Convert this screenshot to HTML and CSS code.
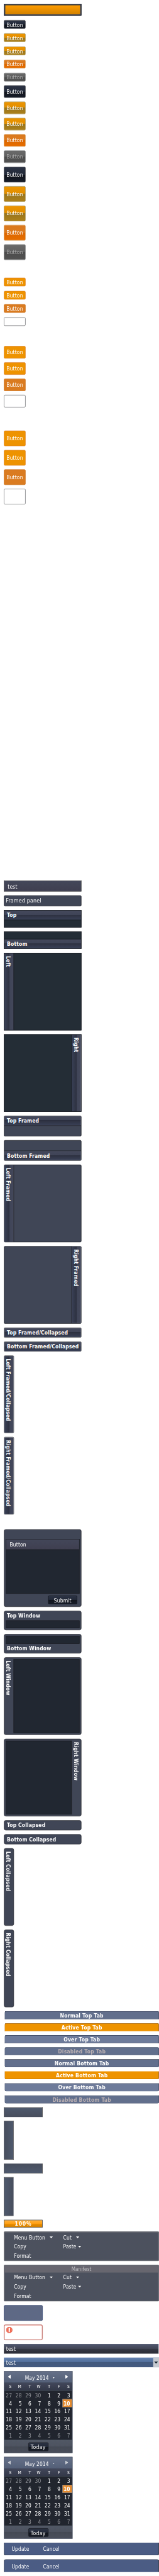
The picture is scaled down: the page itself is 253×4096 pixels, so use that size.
FILE: index.html
```html
<!DOCTYPE html>
<html lang="en">
<head>
<meta charset="utf-8">
<title>Theme widgets</title>
<link rel="stylesheet" href="styles.css">
</head>
<body>
<div class="page">
<main class="sheet">
  <div class="progress"><div class="progress-fill"></div></div>

  <section class="stack small">
    <div class="btn dark">Button</div>
    <div class="btn over">Button</div>
    <div class="btn over">Button</div>
    <div class="btn pressed">Button</div>
    <div class="btn disabled">Button</div>
  </section>
  <section class="stack medium">
    <div class="btn dark">Button</div>
    <div class="btn over">Button</div>
    <div class="btn over">Button</div>
    <div class="btn pressed">Button</div>
    <div class="btn disabled">Button</div>
  </section>
  <section class="stack large">
    <div class="btn dark">Button</div>
    <div class="btn over">Button</div>
    <div class="btn over">Button</div>
    <div class="btn pressed">Button</div>
    <div class="btn disabled">Button</div>
  </section>

  <section class="stack small toolbar-small">
    <div class="btn flat">Button</div>
    <div class="btn flat">Button</div>
    <div class="btn flat-pressed">Button</div>
    <div class="btn empty"></div>
  </section>
  <section class="stack medium toolbar-medium">
    <div class="btn flat">Button</div>
    <div class="btn flat">Button</div>
    <div class="btn flat-pressed">Button</div>
    <div class="btn empty"></div>
  </section>
  <section class="stack large toolbar-large">
    <div class="btn flat">Button</div>
    <div class="btn flat">Button</div>
    <div class="btn flat-pressed">Button</div>
    <div class="btn empty"></div>
  </section>

  <section class="stack panels">
    <div class="strip">test</div>
    <div class="strip framed-strip">Framed panel</div>
    <div class="panel top"><div class="head">Top</div></div>
    <div class="panel bottom"><div class="head">Bottom</div></div>
    <div class="panel left"><div class="head">Left</div></div>
    <div class="panel right"><div class="head">Right</div></div>
    <div class="panel framed top"><div class="head">Top Framed</div></div>
    <div class="panel framed bottom"><div class="head">Bottom Framed</div></div>
    <div class="panel framed left"><div class="head">Left Framed</div></div>
    <div class="panel framed right"><div class="head">Right Framed</div></div>
    <div class="panel framed top collapsed"><div class="head">Top Framed/Collapsed</div></div>
    <div class="panel framed top collapsed"><div class="head">Bottom Framed/Collapsed</div></div>
    <div class="panel framed left collapsed"><div class="head">Left Framed/Collapsed</div></div>
    <div class="panel framed left collapsed"><div class="head">Right Framed/Collapsed</div></div>
  </section>

  <section class="stack windows">
    <div class="window dialog">
      <div class="win-body"><div class="win-bar">Button</div></div>
      <div class="btn dark submit">Submit</div>
    </div>
    <div class="window wtop"><div class="title">Top Window</div><div class="win-body"></div></div>
    <div class="window wbottom"><div class="win-body"></div><div class="title">Bottom Window</div></div>
    <div class="window wleft"><div class="title">Left Window</div><div class="win-body"></div></div>
    <div class="window wright"><div class="win-body"></div><div class="title">Right Window</div></div>
    <div class="window wclosed"><div class="title">Top Collapsed</div></div>
    <div class="window wclosed"><div class="title">Bottom Collapsed</div></div>
    <div class="window vclosed"><div class="title">Left Collapsed</div></div>
    <div class="window vclosed"><div class="title">Right Collapsed</div></div>
  </section>

  <section class="stack tabs">
    <div class="tab">Normal Top Tab</div>
    <div class="tab active">Active Top Tab</div>
    <div class="tab hover">Over Top Tab</div>
    <div class="tab off">Disabled Top Tab</div>
    <div class="tab low">Normal Bottom Tab</div>
    <div class="tab low active">Active Bottom Tab</div>
    <div class="tab low hover">Over Bottom Tab</div>
    <div class="tab low off">Disabled Bottom Tab</div>
  </section>

  <section class="stack misc">
    <div class="tabbar bar-top"></div>
    <div class="tabbar bar-right"></div>
    <div class="tabbar bar-bottom"></div>
    <div class="tabbar bar-left"></div>
    <div class="percent">100%</div>
    <div class="menu">
      <div class="item wide">Menu Button<i class="caret"></i></div><div class="item second">Cut<i class="caret cut"></i></div>
      <div class="item">Copy</div><div class="item second">Paste<i class="caret paste"></i></div>
      <div class="item">Format</div>
    </div>
    <div class="menu titled">
      <div class="menu-title">Manifest</div>
      <div class="item wide">Menu Button<i class="caret"></i></div><div class="item second">Cut<i class="caret cut"></i></div>
      <div class="item">Copy</div><div class="item second">Paste<i class="caret paste"></i></div>
      <div class="item">Format</div>
    </div>
    <div class="tip"></div>
    <div class="tip error">
      <svg width="16" height="16" viewBox="0 0 16 16"><path d="M5 .5h6L15.500 5v6L11 15.500H5L.5 11V5z" fill="#f26a52" stroke="#c9412f"/><path d="M5.400 1.600h5.200l3.800 3.800v5.200l-3.800 3.800H5.400l-3.800-3.800V5.400z" fill="none" stroke="#ff9c89" stroke-width=".8"/><path d="M6.200 3h3.600v7H6.200zM6.200 11h3.600v2H6.200z" fill="#fff"/></svg>
    </div>
    <div class="grid-head">test</div>
    <div class="grid-head lit">test<span class="trigger"><i></i></span></div>

    <div class="cal">
      <div class="cal-top"><i class="prev"></i><span class="month">May 2014<i></i></span><i class="next"></i></div>
      <div class="days"><b>S</b><b>M</b><b>T</b><b>W</b><b>T</b><b>F</b><b>S</b></div>
      <div class="dates">
        <span class="out">27</span><span class="out">28</span><span class="out">29</span><span class="out">30</span><span>1</span><span>2</span><span>3</span>
        <span>4</span><span>5</span><span>6</span><span>7</span><span>8</span><span>9</span><span class="today">10</span>
        <span>11</span><span>12</span><span>13</span><span>14</span><span>15</span><span>16</span><span>17</span>
        <span>18</span><span>19</span><span>20</span><span>21</span><span>22</span><span>23</span><span>24</span>
        <span>25</span><span>26</span><span>27</span><span>28</span><span>29</span><span>30</span><span>31</span>
        <span class="out">1</span><span class="out">2</span><span class="out">3</span><span class="out">4</span><span class="out">5</span><span class="out">6</span><span class="out">7</span>
      </div>
      <div class="cal-foot"><div class="btn dark">Today</div></div>
    </div>
    <div class="cal dim">
      <div class="cal-top"><i class="prev"></i><span class="month">May 2014<i></i></span><i class="next"></i></div>
      <div class="days"><b>S</b><b>M</b><b>T</b><b>W</b><b>T</b><b>F</b><b>S</b></div>
      <div class="dates">
        <span class="out">27</span><span class="out">28</span><span class="out">29</span><span class="out">30</span><span>1</span><span>2</span><span>3</span>
        <span>4</span><span>5</span><span>6</span><span>7</span><span>8</span><span>9</span><span class="today">10</span>
        <span>11</span><span>12</span><span>13</span><span>14</span><span>15</span><span>16</span><span>17</span>
        <span>18</span><span>19</span><span>20</span><span>21</span><span>22</span><span>23</span><span>24</span>
        <span>25</span><span>26</span><span>27</span><span>28</span><span>29</span><span>30</span><span>31</span>
        <span class="out">1</span><span class="out">2</span><span class="out">3</span><span class="out">4</span><span class="out">5</span><span class="out">6</span><span class="out">7</span>
      </div>
      <div class="cal-foot"><div class="btn dark">Today</div></div>
    </div>

    <div class="editor"><span>Update</span><span>Cancel</span></div>
    <div class="editor upper"><span>Update</span><span>Cancel</span></div>
  </section>
</main>
</div>
</body>
</html>
```
FILE: styles.css
```css
* { box-sizing: border-box; }

body { margin: 0; background: #fff; }

.page {
  width: 253px;
  height: 4096px;
  overflow: hidden;
}

.sheet {
  width: 410px;
  height: 6640px;
  padding: 10px 0 10px 10px;
  transform: scale(.61705, .61686);
  transform-origin: 0 0;
  font: 13.8px/16px "DejaVu Sans Condensed", "DejaVu Sans", sans-serif;
  letter-spacing: .2px;
  color: #fff;
  white-space: nowrap;
}

/* progress bar */
.progress {
  width: 200px;
  height: 30px;
  padding: 2px;
  border: 1px solid #17191f;
  background: #404656;
}
.progress-fill {
  height: 24px;
  border: 1px solid #c47f08;
  border-radius: 3px;
  background: linear-gradient(#ff9c00, #d48300);
}

/* buttons */
.stack { display: flex; flex-direction: column; align-items: flex-start; gap: 10px; }
.small { gap: 12px; margin-top: 12px; }
.medium, .large { margin-top: 10px; }
.toolbar-small { margin-top: 46px; }
.toolbar-medium { margin-top: 52px; }
.toolbar-large { margin-top: 60px; }

.btn {
  width: 56px;
  height: 22px;
  display: flex;
  align-items: center;
  justify-content: center;
  padding-top: 2px;
  border: 1px solid;
  border-radius: 3px;
}
.medium .btn { height: 32px; padding-top: 0; }
.large .btn { height: 40px; padding-top: 0; }

.dark { border-color: #05070d; background: linear-gradient(#2c3344, #222938 50%, #11141b 50%, #171c28); }
.over { border-color: #927116; background: linear-gradient(#ed9400, #e18f00 50%, #98751f 50%, #ac801a); }
.pressed { border-color: #cd7311; background: linear-gradient(#da791e, #dd7b1f 50%, #dc6700 50%, #e76e00); }
.disabled { border-color: #4f5050; background: linear-gradient(#6a6a6a, #606060 50%, #4c4c4c 50%, #525252); color: #a9a9a9; }
.flat { border-color: #dd7c20; background: #ee9300; }
.flat-pressed { border-color: #c96d17; background: #da7b20; }
.empty { border-color: #55565a; background: #fff; }

/* panels */
.panels { margin-top: 970px; }

.strip {
  width: 200px;
  height: 28px;
  padding: 6px 0 0 9px;
  border: 1px solid #16171d;
  background: linear-gradient(#434759, #3f3f50);
}
.framed-strip {
  padding: 5px 0 0 4px;
  border-radius: 3px;
  background: #404656;
  font-size: 14.500px;
}

.panel {
  width: 200px;
  height: 200px;
  display: flex;
  overflow: hidden;
  border: 1px solid #17181d;
  background: #242d36;
}
.panel.framed { border-radius: 3px; background: #404656; }
.panel.top { height: 45px; flex-direction: column; }
.panel.bottom { height: 45px; flex-direction: column; justify-content: flex-end; }
.panel.framed.top, .panel.framed.bottom { height: 53px; }
.panel.right { justify-content: flex-end; }

.head { flex: none; font-weight: bold; }
.top .head, .bottom .head { height: 25px; padding: 4px 0 0 7px; }
.top .head {
  border-bottom: 1px solid #17181d;
  background: linear-gradient(#565b6c 1px, #44485b 1px, #3f4457 11px, #2b2f3e 11px, #2f3343 13px, #394056);
}
.bottom .head {
  border-top: 1px solid #17181d;
  background: linear-gradient(#44485b, #3f4457 11px, #2b2f3e 11px, #2f3343 13px, #394056 23px, #5a6071 23px);
}
.left .head, .right .head {
  width: 25px;
  padding: 7px 5px 0 3px;
  writing-mode: vertical-rl;
}
.left .head {
  border-right: 1px solid #17181d;
  background: linear-gradient(90deg, #5a6071 1px, #394056 1px, #2f3343 11px, #2b2f3e 13px, #3f4457 13px, #44485b);
}
.right .head {
  border-left: 1px solid #17181d;
  background: linear-gradient(90deg, #394056, #2f3343 11px, #2b2f3e 13px, #3f4457 13px, #44485b 23px, #5a6071 23px);
}
.framed .head { box-shadow: inset 0 0 0 1px #565c6c; }
.panel.collapsed.top { height: 26px; }
.collapsed.top .head { height: 24px; border: 0; }
.panel.collapsed.left { width: 26px; }
.collapsed.left .head { width: 24px; border: 0; }

/* windows */
.windows { margin-top: 38px; }
.window {
  width: 200px;
  height: 200px;
  display: flex;
  padding: 4px;
  border: 1px solid #2a2b30;
  border-radius: 5px;
  background: #404656;
}
.win-body { flex: 1; border: 1px solid #1a1b1f; background: #212731; }
.dialog { flex-direction: column; padding-top: 24px; align-items: stretch; }
.dialog .win-body { flex: none; height: 141px; }
.win-bar {
  height: 27px;
  padding: 5px 0 0 9px;
  border-bottom: 1px solid #1a1b1f;
  background: linear-gradient(#434759, #3f3f50);
}
.submit { width: 75px; margin: 5px 6px 0 auto; }
.title { flex: none; font-weight: bold; }
.wtop, .wbottom { height: 50px; flex-direction: column; }
.wtop .title, .wbottom .title { height: 20px; padding-left: 3px; }
.wbottom .title { padding-top: 4px; }
.wleft .title, .wright .title, .vclosed .title { width: 20px; padding-top: 3px; writing-mode: vertical-rl; }
.wleft .title { padding-right: 5px; }
.wclosed { height: 26px; padding: 4px 0 0 7px; }
.vclosed { width: 26px; padding-left: 3px; }
.vclosed .title { width: 16px; }

/* tabs */
.tabs { margin: 10px 0 0 2px; }
.tab {
  width: 398px;
  height: 21px;
  padding-top: 2px;
  border: 1px solid #28334c;
  border-bottom-color: #17191f;
  border-radius: 4px 4px 0 0;
  background: #626f8c;
  font-weight: bold;
  line-height: 17px;
  letter-spacing: .35px;
  text-align: center;
}
.tab.low { border-color: #17191f #28334c #28334c; border-radius: 0 0 4px 4px; }
.tab.hover { background: #6e7b9a; }
.tab.off { color: #b9afb2; }
.tab.active { border-color: #85500f; border-bottom-color: #ee9300; background: #ee9300; }
.tab.low.active { border-color: #ee9300 #85500f #85500f; }

.misc { margin-top: 10px; }
.tabbar { width: 100px; height: 25px; border: 1px solid #17181d; }
.bar-top { border-bottom: 0; background: linear-gradient(#4e596d, #484e5d); }
.bar-bottom { border-top: 0; background: linear-gradient(#484e5d, #4e596d); }
.bar-left, .bar-right { width: 25px; height: 100px; }
.bar-right { border-left: 0; background: linear-gradient(90deg, #484e5d, #4e596d); }
.bar-left { border-right: 0; background: linear-gradient(90deg, #4e596d, #484e5d); }

.percent {
  width: 100px;
  height: 20px;
  padding-top: 1px;
  border: 1px solid #1b1a17;
  background: linear-gradient(#ffb03b, #ff9f12 50%, #f09000 50%, #cd7d00);
  font-weight: bold;
  letter-spacing: 1.300px;
  text-align: center;
}

/* menus */
.menu {
  width: 400px;
  height: 76px;
  display: grid;
  grid-template-columns: 151px 1fr;
  grid-template-rows: repeat(3, 24px);
  padding-top: 2px;
  border: 1px solid #585b62;
  border-radius: 2px;
  box-shadow: inset 0 0 0 1px #74747a;
  background: #4c515e;
  font-size: 13.600px;
}
.item { display: flex; align-items: center; padding-left: 25px; }
.item.second { padding-left: 1px; }
.item.wide { gap: 11px; }
.caret { width: 9px; height: 5px; background: #fff; clip-path: polygon(0 0, 100% 0, 50% 100%); }
.caret.cut { margin-left: 11px; }
.caret.paste { margin-left: 4px; }
.titled { height: 94px; padding-top: 1px; grid-template-rows: 18px repeat(3, 24px); }
.menu-title {
  grid-column: 1 / 3;
  margin: 0 1px;
  background: #67666f;
  color: #c1c1c5;
  font-size: 13px;
  line-height: 19px;
  text-align: center;
}

/* tips */
.tip { width: 100px; height: 40px; border: 1px solid #172b5b; border-radius: 3px; background: #5e6985; }
.error {
  padding: 5px 0 0 5px;
  border-color: #a5332a;
  border-radius: 4px;
  box-shadow: inset 0 0 0 1px #df7d72;
  background: #fff;
}
.error svg { display: block; }

/* grid headers */
.grid-head {
  width: 400px;
  height: 25px;
  display: flex;
  padding: 5px 0 0 6px;
  border-right: 1px solid #c5c9d2;
  background: linear-gradient(#525971, #404453 50%, #353844 50%, #2b2d37);
}
.lit { border: 0; background: linear-gradient(#6583b2, #4f6c98 50%, #42597d 50%, #445a80); }
.trigger { width: 15px; height: 25px; margin: -5px 0 0 auto; padding: 10px 0 0 2px; background: #c6cad0; }
.trigger i { display: block; width: 11px; height: 6px; background: #1c2a35; clip-path: polygon(0 0, 100% 0, 50% 100%); }

/* calendar */
.cal { width: 177px; height: 211px; border: 1px solid #707a8e; background: #21252e; }
.cal-top {
  height: 29px;
  display: flex;
  justify-content: space-between;
  padding: 8px 10px 0 9px;
  background: linear-gradient(#657088, #535f77);
}
.prev, .next { width: 8px; height: 11px; background: #fff; clip-path: polygon(0 50%, 100% 0, 100% 100%); }
.next { clip-path: polygon(0 0, 100% 50%, 0 100%); }
.dim .prev, .dim .next { background: #c8ccd3; }
.month { display: flex; align-items: center; gap: 10px; height: 17px; margin-left: 9px; font-size: 13.500px; }
.month i { width: 5px; height: 3px; background: #fff; clip-path: polygon(0 0, 100% 0, 50% 100%); }
.days {
  height: 21px;
  display: grid;
  grid-template-columns: repeat(7, 25px);
  border-bottom: 1px solid #48535c;
  background: linear-gradient(#42475a, #333848);
  font-size: 11px;
  line-height: 21px;
  text-align: right;
}
.days b { padding-right: 6px; font-weight: normal; }
.dates {
  display: grid;
  grid-template: repeat(6, 21px) / repeat(7, 25px);
  font-size: 13.500px;
  line-height: 22px;
  text-align: right;
}
.dates span { padding-right: 5px; }
.out { color: #92949a; }
.dates .today { padding-right: 4px; border: 1px solid #7b8699; background: #e58a2c; font-weight: bold; line-height: 20px; }
.cal-foot {
  height: 33px;
  display: flex;
  justify-content: center;
  padding-top: 7px;
  background: linear-gradient(#515865, #4d5360 50%, #444954 50%, #494e5b);
}
.cal-foot .btn { width: 52px; letter-spacing: .6px; }

/* row editor buttons */
.editor {
  width: 400px;
  height: 33px;
  display: flex;
  gap: 36px;
  padding: 9px 0 0 19px;
  border: 1px solid #16181c;
  border-top: 0;
  border-radius: 0 0 5px 5px;
  background: #4b5c84;
  font-size: 13.500px;
}
.editor.upper { padding-top: 10px; border-top: 1px solid #16181c; border-bottom: 0; border-radius: 5px 5px 0 0; }
```
